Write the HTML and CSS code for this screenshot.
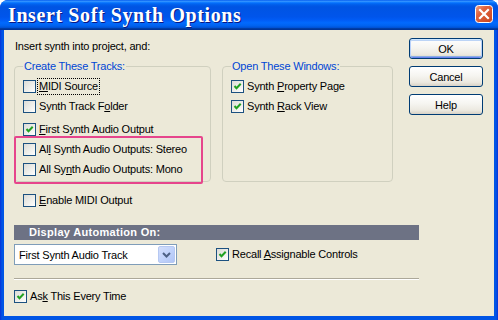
FILE: index.html
```html
<!DOCTYPE html>
<html>
<head>
<meta charset="utf-8">
<link rel="stylesheet" href="styles.css">
</head>
<body>
<div class="window">
  <div class="titlebar">
    <span class="title">Insert Soft Synth Options</span>
    <span class="close">
      <svg width="18" height="18" viewBox="0 0 18 18">
        <defs>
          <linearGradient id="cg" x1="0" y1="0" x2="1" y2="1">
            <stop offset="0" stop-color="#f0a489"/>
            <stop offset="0.35" stop-color="#e0623d"/>
            <stop offset="1" stop-color="#c8431c"/>
          </linearGradient>
        </defs>
        <rect x="0.5" y="0.5" width="17" height="17" rx="3" fill="url(#cg)" stroke="#fff"/>
        <path d="M5 5 L13 13 M13 5 L5 13" stroke="#fff" stroke-width="2.2" stroke-linecap="square"/>
      </svg>
    </span>
  </div>
  <div class="client">
    <div class="top">
      <div class="main">
        <p class="intro">Insert synth into project, and:</p>
        <div class="groups">
          <fieldset class="group g1">
            <legend>Create These Tracks:</legend>
            <label class="cb"><span class="box"></span><span class="lbl focus"><u>M</u>IDI Source</span></label>
            <label class="cb"><span class="box"></span><span class="lbl">Synth Track F<u>o</u>lder</span></label>
            <label class="cb gap"><span class="box on"><svg width="11" height="11" viewBox="0 0 11 11"><path d="M2.5 5 L4.5 7.2 L8.7 2.8" fill="none" stroke="#21a121" stroke-width="2"/></svg></span><span class="lbl"><u>F</u>irst Synth Audio Output</span></label>
            <label class="cb"><span class="box"></span><span class="lbl">Al<u>l</u> Synth Audio Outputs: Stereo</span></label>
            <label class="cb"><span class="box"></span><span class="lbl">All Sy<u>n</u>th Audio Outputs: Mono</span></label>
          </fieldset>
          <fieldset class="group g2">
            <legend>Open These Windows:</legend>
            <label class="cb"><span class="box on"><svg width="11" height="11" viewBox="0 0 11 11"><path d="M2.5 5 L4.5 7.2 L8.7 2.8" fill="none" stroke="#21a121" stroke-width="2"/></svg></span><span class="lbl">Synth <u>P</u>roperty Page</span></label>
            <label class="cb"><span class="box on"><svg width="11" height="11" viewBox="0 0 11 11"><path d="M2.5 5 L4.5 7.2 L8.7 2.8" fill="none" stroke="#21a121" stroke-width="2"/></svg></span><span class="lbl">Synth <u>R</u>ack View</span></label>
          </fieldset>
        </div>
        <label class="cb enable"><span class="box"></span><span class="lbl"><u>E</u>nable MIDI Output</span></label>
      </div>
      <div class="buttons">
        <div class="btn default">OK</div>
        <div class="btn">Cancel</div>
        <div class="btn">Help</div>
      </div>
    </div>
    <div class="bar">Display Automation On:</div>
    <div class="auto-row">
      <div class="select">
        <span>First Synth Audio Track</span>
        <span class="drop"><svg width="9" height="6" viewBox="0 0 9 6"><path d="M1 1 L4.5 4.5 L8 1" fill="none" stroke="#4d6185" stroke-width="2"/></svg></span>
      </div>
      <label class="cb recall"><span class="box on"><svg width="11" height="11" viewBox="0 0 11 11"><path d="M2.5 5 L4.5 7.2 L8.7 2.8" fill="none" stroke="#21a121" stroke-width="2"/></svg></span><span class="lbl">Recall <u>A</u>ssignable Controls</span></label>
    </div>
    <div class="sep"></div>
    <label class="cb ask"><span class="box on"><svg width="11" height="11" viewBox="0 0 11 11"><path d="M2.5 5 L4.5 7.2 L8.7 2.8" fill="none" stroke="#21a121" stroke-width="2"/></svg></span><span class="lbl">As<u>k</u> This Every Time</span></label>
  </div>
  <div class="highlight"></div>
</div>
</body>
</html>
```

FILE: styles.css
```css
html, body {
  margin: 0;
  padding: 0;
  background: #ffffff;
}
body {
  font-family: "Liberation Sans", Arial, sans-serif;
  font-size: 11px;
  letter-spacing: -0.2px;
  color: #000;
}
.window {
  position: relative;
  width: 498px;
  height: 320px;
  box-sizing: border-box;
  background: linear-gradient(to right, #0831d9 0, #0055e5 2px, #0055e5 496px, #0831d9 498px);
  border-radius: 8px 8px 0 0;
  display: flex;
  flex-direction: column;
  overflow: hidden;
}
.titlebar {
  height: 30px;
  flex: none;
  display: flex;
  align-items: center;
  justify-content: space-between;
  padding-left: 8px;
  background: linear-gradient(to bottom, #0058ee 0%, #3593ff 4%, #288eff 6%, #127dff 8%, #036ffc 10%, #0262ee 14%, #0057e5 20%, #0054e3 24%, #0055eb 56%, #005bf5 66%, #026afe 76%, #0062ef 86%, #0052d6 92%, #0040ab 94%, #003092 100%);
}
.title {
  font-family: "Liberation Serif", "Times New Roman", serif;
  font-weight: bold;
  font-size: 20px;
  line-height: 30px;
  color: #fff;
  text-shadow: 1px 1px 0 #0a1883;
  letter-spacing: 0.6px;
}
.close {
  align-self: flex-start;
  margin-top: 5px;
  margin-right: 5px;
  width: 18px;
  height: 18px;
}
.close svg { display: block; }
.client {
  flex: 1;
  margin: 0 4px 4px 4px;
  background: #ece9d8;
  padding-left: 10px;
  display: flex;
  flex-direction: column;
  align-items: flex-start;
}
.top {
  display: flex;
}
.main {
  width: 395px;
  padding-top: 10px;
}
.intro {
  margin: 0 0 0 1px;
  line-height: 13px;
}
.groups {
  display: flex;
  gap: 11px;
  margin-top: 7px;
  align-items: stretch;
}
.group {
  margin: 0;
  border: 1px solid #d0d0bf;
  border-radius: 4px;
  padding: 3px 0 2px 8px;
  box-sizing: border-box;
}
.g1 { width: 197px; }
.g2 { width: 171px; }
.group legend {
  color: #0046d5;
  padding: 0 1px;
  line-height: 13px;
}
.cb {
  display: flex;
  align-items: center;
  height: 20px;
  line-height: 13px;
  white-space: nowrap;
}
.cb.gap { margin-top: 3px; }
.box {
  width: 13px;
  height: 13px;
  box-sizing: border-box;
  border: 1px solid #1c5180;
  background: linear-gradient(135deg, #dcdcd7 0%, #f0f0ec 60%, #ffffff 100%);
  flex: none;
  display: flex;
  align-items: center;
  justify-content: center;
}
.box svg { display: block; }
.lbl {
  margin-left: 3px;
}
.lbl.focus {
  margin-left: 2px;
  padding: 1px 1px;
  outline: 1px dotted #000;
  outline-offset: 0;
}
.enable {
  margin-top: 8px;
  margin-left: 9px;
}
.buttons {
  padding-top: 8px;
  display: flex;
  flex-direction: column;
  gap: 7px;
}
.btn {
  width: 74px;
  height: 21px;
  box-sizing: border-box;
  border: 1px solid #003c74;
  border-radius: 3px;
  background: linear-gradient(to bottom, #ffffff 0%, #f6f5f1 45%, #ece9e0 80%, #d8d2c6 100%);
  display: flex;
  align-items: center;
  justify-content: center;
}
.btn.default {
  box-shadow: inset 0 1px 0 #cee7ff, inset 1px 0 0 #b9d1fa, inset -1px 0 0 #b9d1fa, inset 0 -1px 0 #6982ee, inset 0 2px 0 #bcd4f6, inset 0 -2px 0 #89ade4;
}
.bar {
  margin-top: 15px;
  width: 405px;
  height: 15px;
  box-sizing: border-box;
  padding-left: 15px;
  background: #6d7284;
  color: #fff;
  font-weight: bold;
  line-height: 15px;
  font-size: 11px;
  letter-spacing: 0.3px;
}
.auto-row {
  margin-top: 4px;
  display: flex;
  align-items: center;
}
.select {
  width: 163px;
  height: 21px;
  box-sizing: border-box;
  border: 1px solid #7f9db9;
  background: #fff;
  display: flex;
  align-items: center;
  justify-content: space-between;
  padding-left: 4px;
  padding-right: 1px;
}
.drop {
  width: 17px;
  height: 17px;
  box-sizing: border-box;
  border: 1px solid #b6c8f2;
  border-radius: 2px;
  background: linear-gradient(135deg, #d3defb 0%, #c1d3fb 50%, #b1c5f5 100%);
  display: flex;
  align-items: center;
  justify-content: center;
}
.drop svg { display: block; }
.recall {
  margin-left: 39px;
}
.sep {
  margin-top: 13px;
  width: 405px;
  height: 1px;
  background: #aca899;
  border-bottom: 1px solid #fff;
}
.ask {
  margin-top: 6px;
}
.highlight {
  position: absolute;
  left: 14px;
  top: 136px;
  width: 189px;
  height: 48px;
  box-sizing: border-box;
  border: 2px solid #e6458c;
  border-radius: 2px;
  pointer-events: none;
}
```
